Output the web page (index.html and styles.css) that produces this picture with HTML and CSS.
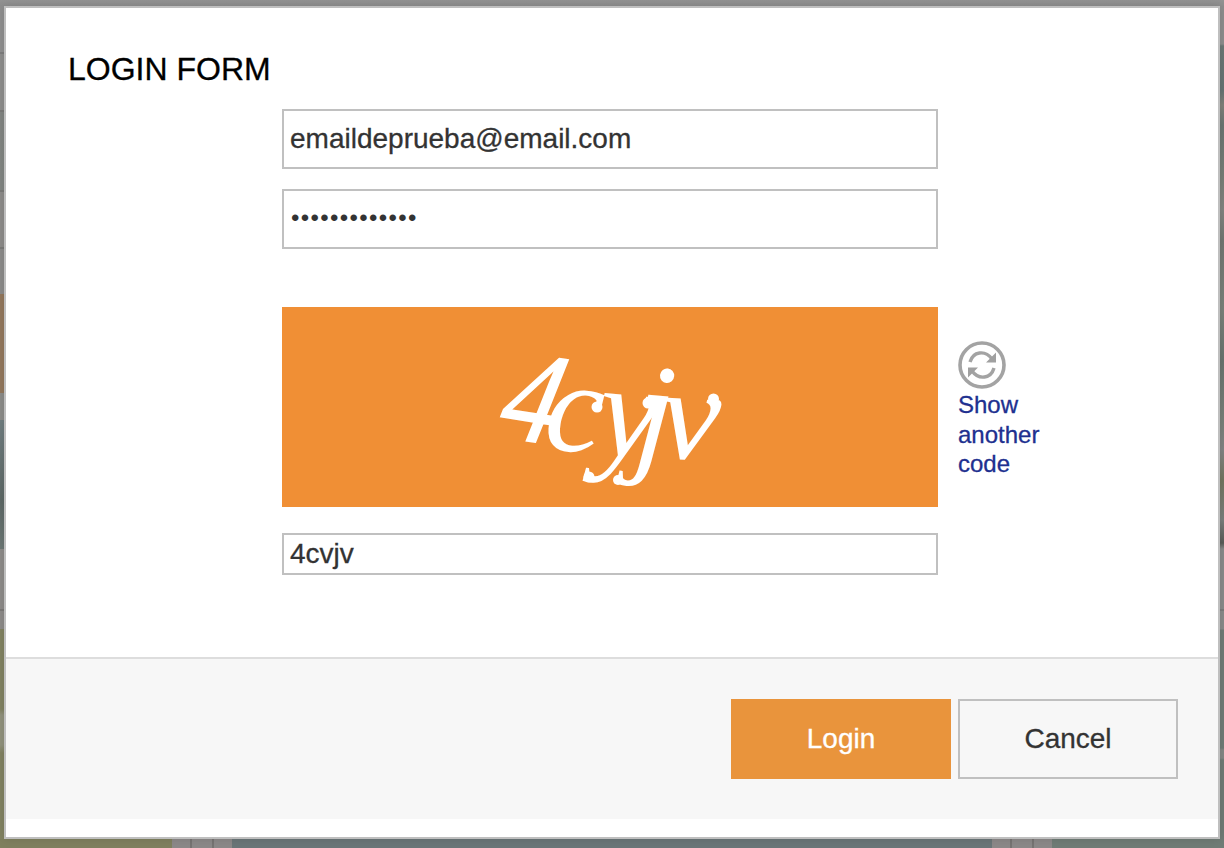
FILE: index.html
```html
<!DOCTYPE html>
<html lang="en">
<head>
<meta charset="utf-8">
<title>Login form</title>
<link rel="stylesheet" href="styles.css">
</head>
<body>
<div class="page">
  <main class="dialog">
    <section class="content">
      <h1 class="title">LOGIN FORM</h1>
      <div class="form">
        <div class="field">emaildeprueba@email.com</div>
        <div class="field password">•••••••••••••</div>
        <div class="captcha-row">
          <svg class="captcha" viewBox="282 307 656 200" role="img" aria-label="Captcha">
            <text class="bold-stroke" transform="translate(496 436) rotate(9) skewX(-4) scale(.9 1.01)">4</text>
            <text transform="translate(543 449) rotate(4) scale(1.02 1)">c</text>
            <text transform="translate(596 454) rotate(5) scale(1.02 1.03)">y</text>
            <text transform="translate(633 457) rotate(5) scale(1.03 1.06)">j</text>
            <text transform="translate(658 457) rotate(3) scale(1.05 1)">v</text>
            <circle cx="597" cy="407" r="5.500"/>
            <circle cx="648" cy="403" r="5.500"/>
            <circle cx="589" cy="477" r="5.500"/>
            <circle cx="618" cy="480" r="5"/>
            <circle cx="713.500" cy="399" r="5.500"/>
          </svg>
          <a class="refresh">
            <svg class="refresh-icon" viewBox="0 0 48 48">
              <circle cx="24" cy="24" r="22"/>
              <path class="arc" d="M12 21C15 10.500 27 8.500 34 18M36 27C33 37.500 21 39.500 14 30"/>
              <path class="head" d="M38 11.500V21.500H28ZM10 36.500V26.500H20Z"/>
            </svg>
            <span>Show another code</span>
          </a>
        </div>
        <div class="field code">4cvjv</div>
      </div>
    </section>
    <footer class="actions">
      <button class="button primary">Login</button>
      <button class="button">Cancel</button>
    </footer>
  </main>
</div>
</body>
</html>
```
FILE: styles.css
```css
* { box-sizing: border-box; }
body { margin: 0; font-family: "Liberation Sans", Arial, sans-serif; font-size: 28px; color: #333; -webkit-text-stroke: .3px; }
.page {
  width: 1224px;
  height: 848px;
  padding: 6px 4px 9px;
  overflow: hidden;
  background:
    linear-gradient(#939393, #8e8e8e) 0 0 / 100% 6px no-repeat,
    linear-gradient(90deg, #7f805f 172px, #8c8989 172px 190px, #777473 190px 192px, #8c8989 192px 212px, #777473 212px 214px, #8c8989 214px 232px, #6a7678 232px 992px, #8c8989 992px 1010px, #777473 1010px 1012px, #8c8989 1012px 1032px, #777473 1032px 1034px, #8c8989 1034px 1052px, #707c76 1052px) 0 100% / 100% 9px no-repeat,
    linear-gradient(#8f8f8f 52px, #7d7d7d 52px 54px, #8d8d8c 54px 110px, #7a7a78 110px 112px, #828582 112px, #828683 190px, #7b7b79 190px 192px, #8d8c8a 192px 247px, #7b7b79 247px 249px, #8c8b8a 249px 294px, #93785d 294px 393px, #8c8c89 393px 420px, #707e80 420px, #5d6866 500px, #6c7875 549px, #8d8b89 549px 609px, #7b7977 609px 611px, #8d8b89 611px 629px, #828362 629px 709px, #91927d 715px 745px, #828362 753px) 0 0 / 4px 100% no-repeat,
    linear-gradient(#8d8d8d 44px, #6b7775 46px, #657373 90px, #80807a 105px, #6b7572 125px, #787e77 180px, #838480 210px, #717772 240px, #7a817a 310px, #69746f 360px, #798079 424px, #838484 450px, #72755f 480px, #7a7e7c 520px, #5a5b57 543px, #8a8a8a 549px 609px, #7b7b7b 609px 611px, #8a8a8a 611px 629px, #707b76 630px 748px, #858785 750px 758px, #6f7b75 760px) 100% 0 / 4px 100% no-repeat;
}
.dialog { height: 833px; border: 2px solid #bfbfbf; background: #fff; box-shadow: 0 0 10px rgba(0, 0, 0, .12); }
.content { height: 649px; padding: 43px 62px 0; }
.title { margin: 0; font-size: 32px; line-height: 36px; font-weight: 400; color: #000; }
.form { width: 772px; margin: 22px 0 0 214px; }
.field { width: 656px; height: 60px; padding-left: 6px; border: 2px solid silver; line-height: 56px; }
.password { margin-top: 20px; font-size: 24px; letter-spacing: 1.35px; padding-left: 7px; line-height: 53px; -webkit-text-stroke: 0; }
.captcha-row { display: flex; gap: 20px; margin-top: 58px; }
.captcha { width: 656px; height: 200px; flex: none; background: #f08f35; fill: #fff; -webkit-text-stroke: 0; }
.captcha text { font: italic 130px "Liberation Serif", serif; }
.captcha .bold-stroke { stroke: #fff; stroke-width: 1.5; }
.refresh { width: 96px; padding-top: 34px; color: #20308f; font-size: 24px; line-height: 29.5px; }
.refresh-icon { display: block; width: 48px; height: 48px; margin-bottom: 1px; fill: none; stroke: #a3a3a3; stroke-width: 3.6; }
.refresh-icon .arc { stroke-width: 3.4; }
.refresh-icon .head { fill: #a0a0a0; stroke: none; }
.code { height: 42px; margin-top: 26px; line-height: 38px; }
.actions { display: flex; justify-content: flex-end; gap: 7px; height: 162px; padding: 40px 40px 0; border-top: 2px solid #ddd; background: #f7f7f7; }
.button { width: 220px; height: 80px; padding: 0; border: 2px solid silver; background: transparent; font: inherit; color: #333; line-height: 76px; }
.primary { border-color: #e9943c; background: #e9943c; color: #fff; }
```
